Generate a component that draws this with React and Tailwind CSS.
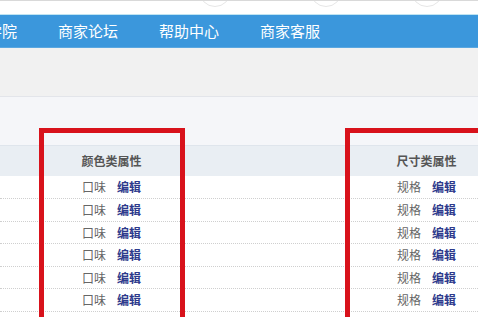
const NAV = ["商家学院", "商家论坛", "帮助中心", "商家客服"];

// Row heights alternate so the dotted rules land on the same pixels as the shot.
const ROWS = [23, 23, 22, 23, 22, 23];

const FONT = {
  fontFamily: '"Noto Sans CJK SC", "Liberation Sans", sans-serif',
};

function Cell({ label }) {
  return (
    <div className="flex items-center justify-center gap-[11px] text-[12px] leading-none">
      <span className="text-[#666]">{label}</span>
      <span className="font-bold text-[#2e3a8c]">编辑</span>
    </div>
  );
}

export default function App() {
  return (
    <div
      className="relative w-[478px] h-[317px] overflow-hidden bg-white"
      style={FONT}
    >
      {/* top bar with the bottoms of the round icons peeking in */}
      <div className="relative h-[14px] border-t border-[#d9d9d9] bg-white overflow-hidden">
        <div className="absolute left-[199px] top-[-26px] w-[32px] h-[32px] rounded-full border border-[#e6e6e6]" />
        <div className="absolute left-[310px] top-[-26px] w-[32px] h-[32px] rounded-full border border-[#e6e6e6]" />
        <div className="absolute left-[411px] top-[-26px] w-[32px] h-[32px] rounded-full border border-[#e6e6e6]" />
      </div>

      <nav className="h-[34px] bg-[#3b97dc] border-t border-[#bfe4f2] border-b border-b-[#5aa7e0] flex items-center gap-[41px] ml-[-43px] text-[15px] text-white">
        {NAV.map((n) => (
          <span key={n}>{n}</span>
        ))}
      </nav>

      <div className="h-[49px] bg-[#f1f1f1] border-b border-[#e3e5ea]" />
      <div className="h-[48px] bg-[#f5f6f9]" />

      {/* table */}
      <div className="w-[508px]">
        <div className="h-[31px] flex items-center bg-[#e9eef3] border-t border-[#dfe5ec] text-[12px] font-bold text-[#555]">
          <div className="w-[39px]" />
          <div className="w-[145px] text-center">颜色类属性</div>
          <div className="w-[161px]" />
          <div className="w-[163px] text-center">尺寸类属性</div>
        </div>
        {ROWS.map((h, i) => (
          <div
            key={i}
            className="flex items-center border-b border-dotted border-[#cfcfcf]"
            style={{ height: h }}
          >
            <div className="w-[39px]" />
            <div className="w-[145px]">
              <Cell label="口味" />
            </div>
            <div className="w-[161px]" />
            <div className="w-[163px]">
              <Cell label="规格" />
            </div>
          </div>
        ))}
      </div>

      {/* red highlight boxes drawn over the table */}
      <div className="absolute left-[39px] top-[128px] w-[146px] h-[220px] border-[5px] border-[#d8121b]" />
      <div className="absolute left-[345px] top-[128px] w-[170px] h-[220px] border-[5px] border-[#d8121b]" />
    </div>
  );
}
